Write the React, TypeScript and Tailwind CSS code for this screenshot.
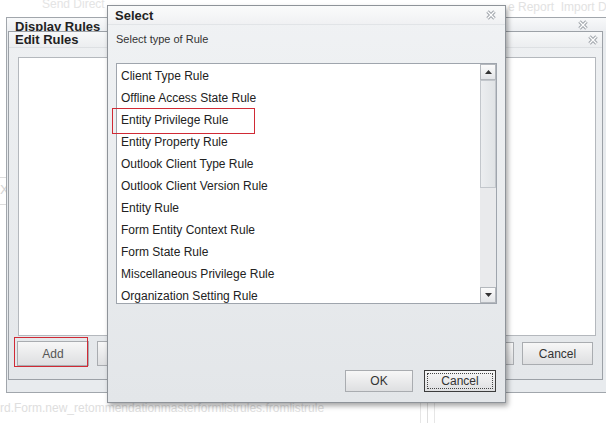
import React from "react";

const rules = [
  "Client Type Rule",
  "Offline Access State Rule",
  "Entity Privilege Rule",
  "Entity Property Rule",
  "Outlook Client Type Rule",
  "Outlook Client Version Rule",
  "Entity Rule",
  "Form Entity Context Rule",
  "Form State Rule",
  "Miscellaneous Privilege Rule",
  "Organization Setting Rule",
];

function CloseIcon() {
  return (
    <svg width="12" height="12" viewBox="0 0 12 12">
      <path d="M2.5 2.5 L9.5 9.5 M9.5 2.5 L2.5 9.5" stroke="#a3a8ae" strokeWidth="3.4" />
      <path d="M2.5 2.5 L9.5 9.5 M9.5 2.5 L2.5 9.5" stroke="#ffffff" strokeWidth="1.2" />
    </svg>
  );
}

function Btn({ label, focused, className }: any) {
  return (
    <div
      className={
        "flex items-center justify-center border bg-gradient-to-b from-[#f7f7f7] to-[#dedfe1] text-[12px] text-[#333] " +
        (focused ? "border-[#3c3c3c] p-[2px] " : "border-[#a9acb0] ") +
        (className || "")
      }
    >
      {focused ? (
        <div className="flex h-full w-full items-center justify-center border border-dotted border-[#444]">
          {label}
        </div>
      ) : (
        label
      )}
    </div>
  );
}

function ScrollArrow({ up }: any) {
  return (
    <div className="flex h-[16px] w-[16px] items-center justify-center border border-[#b4b8bd] bg-gradient-to-b from-[#fbfbfb] to-[#e3e5e8]">
      <svg width="7" height="4" viewBox="0 0 7 4">
        <path d={up ? "M0 4 L3.5 0 L7 4 Z" : "M0 0 L3.5 4 L7 0 Z"} fill="#333" />
      </svg>
    </div>
  );
}

export default function App() {
  return (
    <div className="relative h-[423px] w-[606px] overflow-hidden bg-white font-['Liberation_Sans',Arial,sans-serif] text-[#222]">
      {/* faded page behind the dialogs */}
      <div className="absolute left-[42px] top-[-3px] text-[12px] leading-[14px] text-[#e4e4e4]">Send Direct</div>
      <div className="absolute left-[508px] top-[0px] whitespace-nowrap text-[12px] leading-[14px] text-[#e2e2e2]">e Report&nbsp; Import D</div>
      <div className="absolute left-[0px] top-[399px] whitespace-nowrap text-[12px] text-[#dedede]">
        rd.Form.new_retommendationmasterformlistrules.fromlistrule
      </div>
      <div className="absolute left-[420px] top-[403px] h-[20px] w-[1px] bg-[#e6e6e6]" />
      <div className="absolute left-[427px] top-[403px] h-[20px] w-[1px] bg-[#dedede]" />
      <div className="absolute left-[434px] top-[403px] h-[20px] w-[1px] bg-[#e6e6e6]" />
      <div className="absolute left-[0px] top-[180px] text-[13px] text-[#d4d4d4]">X</div>
      <div className="absolute left-[0px] top-[177px] h-[1px] w-[6px] bg-[#dddddd]" />
      <div className="absolute left-[0px] top-[204px] h-[1px] w-[6px] bg-[#dddddd]" />

      {/* Display Rules */}
      <div className="absolute left-[6px] top-[17px] flex h-[376px] w-[620px] flex-col border border-[#a1a6ac] bg-[#e8ebee]">
        <div className="flex h-[13px] items-start justify-between overflow-hidden bg-gradient-to-b from-[#f8f9fa] to-[#eceef1] pl-[8px] pr-[36px]">
          <span className="mt-[1px] text-[13px] font-bold leading-[15px]">Display Rules</span>
          <span className="mt-[1px]">
            <CloseIcon />
          </span>
        </div>
      </div>

      {/* Edit Rules */}
      <div className="absolute left-[8px] top-[31px] flex h-[349px] w-[595px] flex-col border border-[#9ca1a7] bg-gradient-to-b from-[#eef0f2] to-[#e4e7ea]">
        <div className="flex h-[16px] items-center justify-between border-b border-[#dde0e3] bg-gradient-to-b from-[#f7f8f9] to-[#eceef0] pl-[6px] pr-[3px]">
          <span className="text-[13px] font-bold leading-[15px]">Edit Rules</span>
          <CloseIcon />
        </div>
        <div className="flex flex-1 flex-col pb-[13px] pl-[9px] pr-[6px] pt-[9px]">
          <div className="h-[279px] border border-[#b4b8bd] bg-white" />
          <div className="mt-[5px] flex items-center">
            <Btn label="Add" className="ml-[-1px] h-[25px] w-[72px] text-[#555]" />
            <Btn label="" className="ml-[8px] h-[25px] w-[72px]" />
            <div className="flex-1" />
            <Btn label="" className="h-[23px] w-[71px]" />
            <Btn label="Cancel" className="ml-[8px] mr-[3px] h-[23px] w-[71px]" />
          </div>
        </div>
      </div>

      {/* Select */}
      <div className="absolute left-[107px] top-[5px] flex h-[398px] w-[399px] flex-col border border-[#8e9399] bg-gradient-to-b from-[#f0f2f4] to-[#e3e6e9] shadow-[2px_3px_5px_rgba(0,0,0,0.35)]">
        <div className="flex h-[19px] items-center justify-between border-b border-[#e1e4e7] bg-gradient-to-b from-[#fafbfb] to-[#f0f1f3] pl-[7px] pr-[8px]">
          <span className="text-[13px] font-bold leading-[15px]">Select</span>
          <CloseIcon />
        </div>
        <div className="flex flex-1 flex-col px-[8px] pb-[10px]">
          <div className="mt-[7px] h-[14px] text-[11px] leading-[14px] text-[#333]">Select type of Rule</div>
          <div className="mt-[17px] flex h-[241px] border border-[#9fa5ad] bg-white">
            <div className="flex-1 overflow-hidden pt-[1px]">
              {rules.map((r) => (
                <div key={r} className="flex h-[22px] items-center whitespace-nowrap pl-[4px] text-[12px]">
                  {r}
                </div>
              ))}
            </div>
            <div className="flex w-[16px] flex-col bg-[#e9eaec]">
              <ScrollArrow up />
              <div className="h-[108px] border border-[#c3c7cc] bg-gradient-to-r from-[#eceef0] to-[#e0e3e6]" />
              <div className="flex-1" />
              <ScrollArrow />
            </div>
          </div>
          <div className="mt-auto flex justify-end gap-[11px] pr-[1px]">
            <Btn label="OK" className="h-[22px] w-[68px]" />
            <Btn label="Cancel" focused className="h-[22px] w-[72px]" />
          </div>
        </div>
      </div>

      {/* red annotations */}
      <div className="absolute left-[112px] top-[108px] h-[26px] w-[143px] border border-[#d02a35]" />
      <div className="absolute left-[14px] top-[337px] h-[30px] w-[74px] border border-[#d02a35]" />
    </div>
  );
}
